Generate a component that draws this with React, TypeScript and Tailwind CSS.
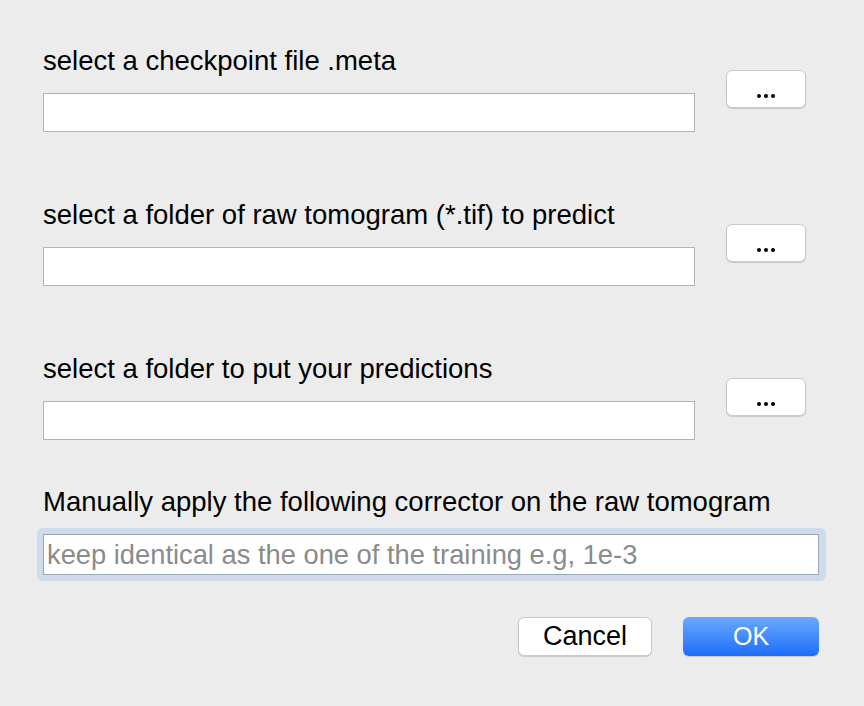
import React from 'react';

const font = { fontFamily: '"Liberation Sans", Arial, sans-serif' };

function BrowseButton() {
  return (
    <button className="w-[80px] h-[38px] shrink-0 rounded-[6px] bg-white border border-[#c8c8c8] shadow-[0_1px_1px_rgba(0,0,0,0.15)] flex items-end justify-center gap-[3px] pb-[9px]">
      <span className="w-[4px] h-[4px] rounded-full bg-black" />
      <span className="w-[4px] h-[4px] rounded-full bg-black" />
      <span className="w-[4px] h-[4px] rounded-full bg-black" />
    </button>
  );
}

function FileRow({ label }: { label: string }) {
  return (
    <div className="flex items-center">
      <div className="flex flex-col w-[652px]">
        <div className="h-[30px] text-[27.5px] leading-[30px] text-black whitespace-nowrap">{label}</div>
        <div className="mt-[17px] h-[39px] bg-white border border-[#b3b3b3]" />
      </div>
      <div className="ml-[31px]">
        <BrowseButton />
      </div>
    </div>
  );
}

export default function App() {
  return (
    <div className="w-[864px] h-[706px] bg-[#ececec] pl-[43px] pt-[46px]" style={font}>
      <div className="flex flex-col gap-[68px]">
        <FileRow label="select a checkpoint file .meta" />
        <FileRow label="select a folder of raw tomogram (*.tif) to predict" />
        <FileRow label="select a folder to put your predictions" />
      </div>

      <div className="mt-[47px] h-[30px] text-[27.5px] leading-[30px] text-black whitespace-nowrap">
        Manually apply the following corrector on the raw tomogram
      </div>
      <div className="mt-[11px] -ml-[6px] w-[789px] h-[53px] rounded-[6px] bg-[#cfdbea] p-[6px] pr-[7px]">
        <div className="h-[41px] bg-white border border-[#9aa7b8] flex items-center pl-[3px]">
          <span className="text-[27.3px] text-[#8b8b8b] leading-none whitespace-nowrap">
            keep identical as the one of the training e.g, 1e-3
          </span>
        </div>
      </div>

      <div className="mt-[36px] flex justify-end w-[776px] gap-[31px]">
        <button className="w-[134px] h-[39px] rounded-[6px] bg-white border border-[#c8c8c8] shadow-[0_1px_1px_rgba(0,0,0,0.15)] text-[27px] leading-none text-black">
          Cancel
        </button>
        <button className="w-[136px] h-[39px] rounded-[6px] bg-gradient-to-b from-[#6aa8fb] to-[#1a6cfb] text-[25px] leading-none text-white shadow-[0_1px_1px_rgba(0,0,0,0.15)]">
          OK
        </button>
      </div>
    </div>
  );
}
